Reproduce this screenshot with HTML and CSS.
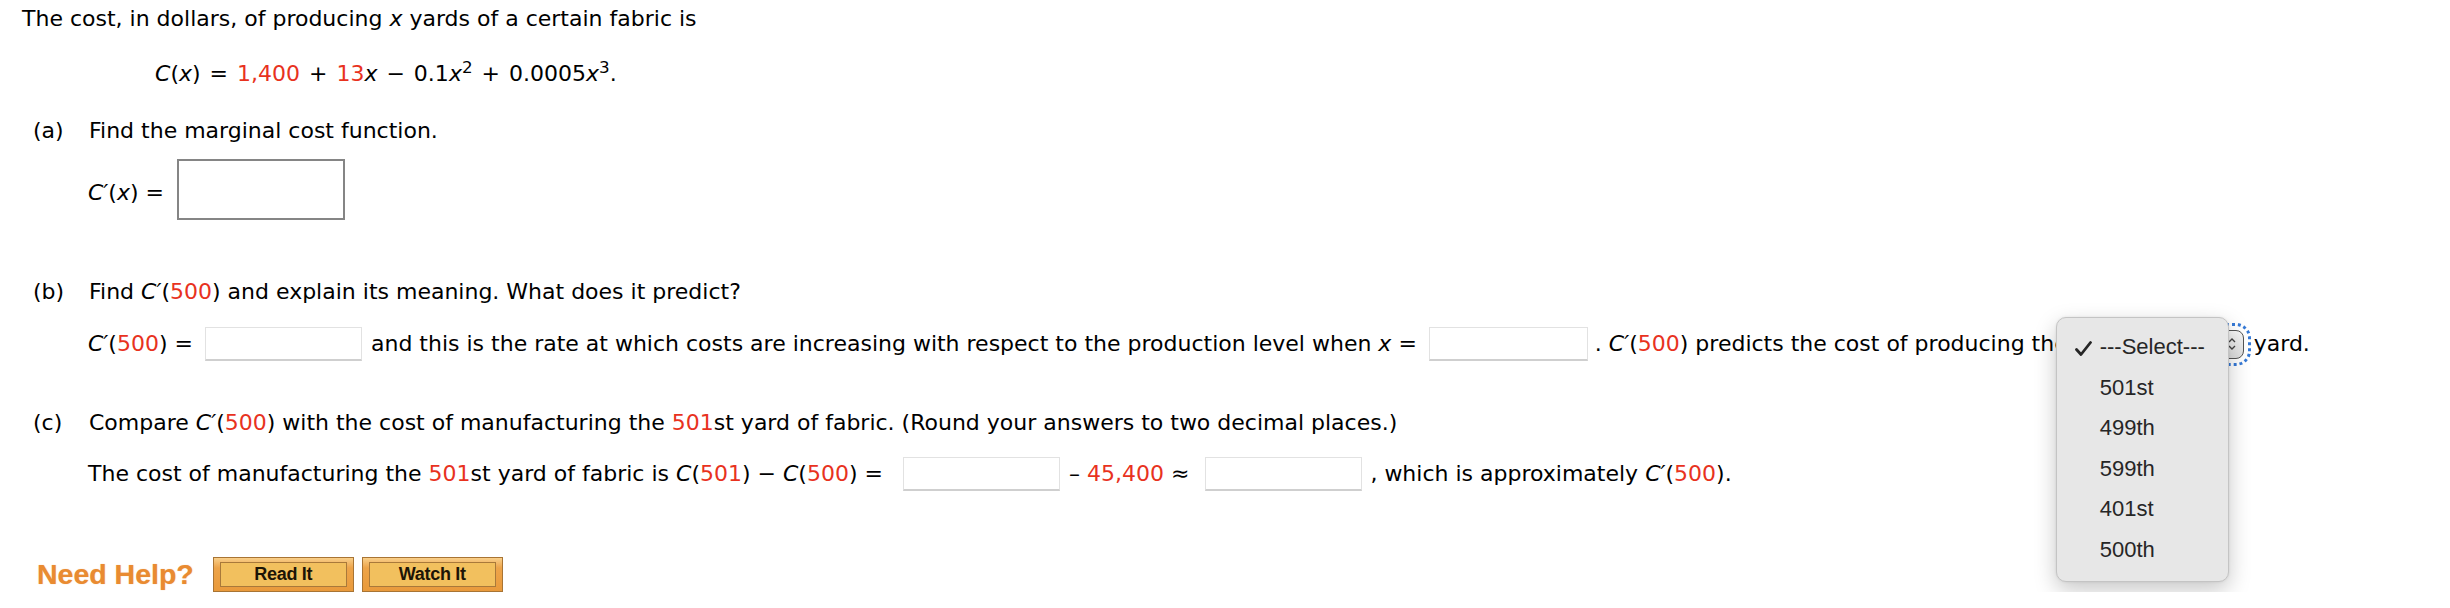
FILE: index.html
```html
<!DOCTYPE html>
<html lang="en">
<head>
<meta charset="utf-8">
<title>Marginal cost</title>
<link rel="stylesheet" href="styles.css">
</head>
<body>
<div class="page">
  <p class="line">The cost, in dollars, of producing <i>x</i> yards of a certain fabric is</p>
  <p class="line eq"><i>C</i>(<i>x</i>) = <span class="red">1,400</span> + <span class="red">13</span><i>x</i> &minus; 0.1<i>x</i><sup>2</sup> + 0.0005<i>x</i><sup>3</sup>.</p>

  <div class="part pa"><span class="lbl">(a)</span><span>Find the marginal cost function.</span></div>
  <div class="row rowa"><span class="lab"><i>C&prime;</i>(<i>x</i>) =</span><span class="bigbox"></span></div>

  <div class="part pb"><span class="lbl">(b)</span><span>Find <i>C&prime;</i>(<span class="red">500</span>) and explain its meaning. What does it predict?</span></div>
  <div class="row rowb">
    <span><i>C&prime;</i>(<span class="red">500</span>) =</span>
    <span class="inp w157"></span>
    <span>and this is the rate at which costs are increasing with respect to the production level when <i>x</i> =</span>
    <span class="inp w159"></span>
    <span>. <i>C&prime;</i>(<span class="red">500</span>) predicts the cost of producing the</span>
    <span class="select">
      <svg class="sel-arrow" width="10" height="16" viewBox="0 0 10 16"><path d="M2 6 L5 3 L8 6 M2 10 L5 13 L8 10" fill="none" stroke="#444" stroke-width="1.4"/></svg>
      <span class="menu">
        <span class="opt"><svg class="check" width="17" height="15" viewBox="0 0 17 15"><path d="M1.5 8.5 L6 13.5 L15.5 1.5" fill="none" stroke="#262626" stroke-width="2.8" stroke-linecap="round" stroke-linejoin="round"/></svg>---Select---</span>
        <span class="opt">501st</span>
        <span class="opt">499th</span>
        <span class="opt">599th</span>
        <span class="opt">401st</span>
        <span class="opt">500th</span>
      </span>
    </span>
    <span>yard.</span>
  </div>

  <div class="part pc"><span class="lbl">(c)</span><span>Compare <i>C&prime;</i>(<span class="red">500</span>) with the cost of manufacturing the <span class="red">501</span>st yard of fabric. (Round your answers to two decimal places.)</span></div>
  <div class="row rowc">
    <span>The cost of manufacturing the <span class="red">501</span>st yard of fabric is <i>C</i>(<span class="red">501</span>) &minus; <i>C</i>(<span class="red">500</span>) =</span>
    <span class="inp w157 i3"></span>
    <span>&ndash; <span class="red">45,400</span> &asymp;</span>
    <span class="inp w157 i4"></span>
    <span>, which is approximately <i>C&prime;</i>(<span class="red">500</span>).</span>
  </div>

  <div class="help">
    <span class="need">Need Help?</span>
    <span class="btn"><span class="btn-in">Read It</span></span>
    <span class="btn"><span class="btn-in">Watch It</span></span>
  </div>
</div>
</body>
</html>
```

FILE: styles.css
```css
* { box-sizing: border-box; }

body {
  margin: 0;
  background: #ffffff;
  color: #000000;
  font-family: "DejaVu Sans", Verdana, sans-serif;
  font-size: 22px;
}

.page {
  padding: 4px 0 0 22px;
}

.line {
  margin: 0;
  line-height: 30px;
  white-space: nowrap;
}

.eq {
  margin-top: 25px;
  padding-left: 133px;
  word-spacing: 2px;
}

sup {
  font-size: 0.76em;
  line-height: 0;
  vertical-align: 0.5em;
}

.red { color: #e8321e; }

.part {
  display: flex;
  line-height: 30px;
  white-space: nowrap;
}

.lbl {
  width: 67px;
  padding-left: 11px;
}

.pa { margin-top: 27px; }
.pb { margin-top: 57px; }
.pc { margin-top: 47px; }

.row {
  display: flex;
  align-items: center;
  padding-left: 66px;
  line-height: 30px;
  white-space: nowrap;
}

.rowa {
  margin-top: 13px;
  align-items: flex-end;
}

.rowa .lab { margin-bottom: 12px; }

.bigbox {
  width: 168px;
  height: 61px;
  margin-left: 13px;
  border: 2px solid #858585;
  background: #fff;
}

.rowb { margin-top: 20px; height: 34px; }
.rowc { margin-top: 19px; height: 34px; }

.inp {
  height: 34px;
  margin: 0 9px 0 12px;
  background: #fff;
  border: 1px solid #e2e2e2;
  border-bottom: 2px solid #cfcfcf;
}

.w157 { width: 157px; }
.w159 { width: 159px; margin-right: 7px; }
.i3 { margin-left: 20px; }
.i4 { margin-left: 16px; margin-right: 8px; }

.select {
  position: relative;
  width: 170px;
  height: 29px;
  margin: 0 10px 0 6px;
  border: 1.5px solid #555;
  border-radius: 8px;
  background: linear-gradient(#f6f6f6, #dedede);
  outline: 3px dotted #3579d6;
  outline-offset: 4px;
}

.sel-arrow {
  position: absolute;
  right: 6px;
  top: 5px;
}

.menu {
  position: absolute;
  right: 14px;
  top: -13.5px;
  width: 173px;
  display: flex;
  flex-direction: column;
  padding: 9px 0 11px;
  background: #e7e7e7;
  border: 1px solid #c4c4c4;
  border-radius: 10px;
  box-shadow: 0 8px 22px rgba(0, 0, 0, 0.22), 0 0 3px rgba(0, 0, 0, 0.08);
  font-family: "Liberation Sans", Helvetica, Arial, sans-serif;
  font-size: 22px;
  color: #262626;
  z-index: 2;
}

.opt {
  position: relative;
  height: 40.5px;
  line-height: 40.5px;
  padding-left: 43px;
}

.check {
  position: absolute;
  left: 18px;
  top: 14px;
}

.help {
  display: flex;
  align-items: center;
  margin-top: 66px;
  padding-left: 15px;
  height: 35px;
}

.need {
  font-family: "Liberation Sans", Arial, sans-serif;
  font-weight: bold;
  font-size: 28.5px;
  line-height: 35px;
  color: #e98b31;
  text-shadow: 0 0 1px rgba(233, 139, 49, 0.6);
  margin-right: 19px;
}

.btn {
  width: 141px;
  height: 35px;
  margin-right: 8px;
  padding: 4px 6px 4px 6px;
  border: 1px solid #a87434;
  background: linear-gradient(#f9cf8a 0%, #eda44a 30%, #e99a3c 100%);
}

.btn-in {
  display: flex;
  align-items: center;
  justify-content: center;
  height: 100%;
  border: 1px solid #a9793a;
  background: #f2c05e;
  font-family: "Liberation Sans", Arial, sans-serif;
  font-weight: bold;
  font-size: 18px;
  letter-spacing: -0.3px;
  color: #1c1406;
}
```
